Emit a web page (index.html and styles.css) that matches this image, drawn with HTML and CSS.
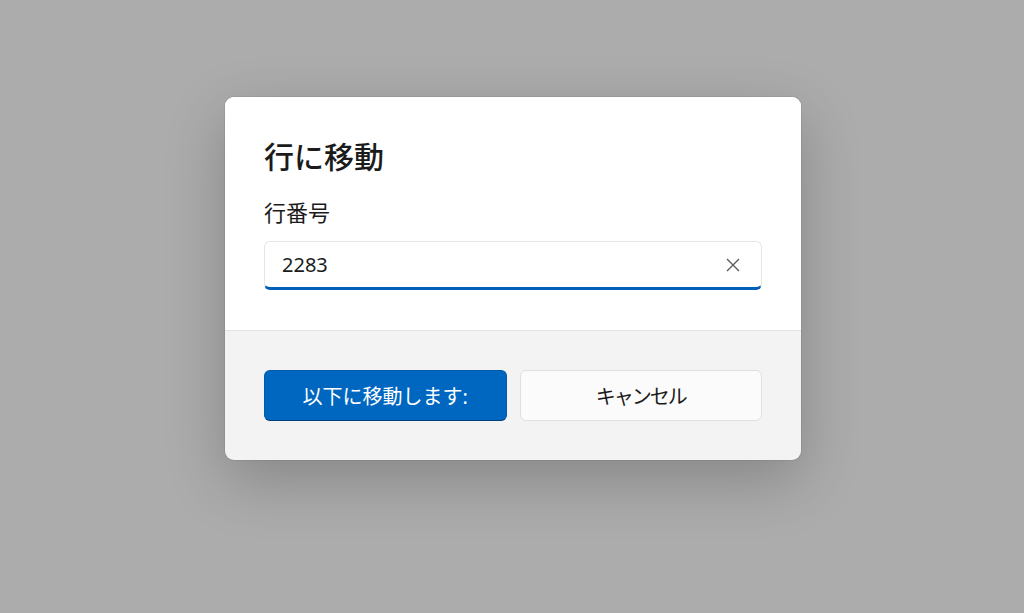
FILE: index.html
```html
<!DOCTYPE html>
<html lang="ja">

<head>
    <meta charset="utf-8">
    <meta name="viewport" content="width=device-width, initial-scale=1.0">
    <title>行に移動</title>
    <link rel="stylesheet" href="styles.css">
</head>

<body>
    <div class="dialog">
        <div class="dialog-body">
            <h1 class="dialog-title">行に移動</h1>
            <label class="field-label" for="line">行番号</label>
            <div class="text-box">
                <input id="line" type="text" value="2283">
                <span class="clear-btn">
                    <svg width="14" height="14" viewBox="0 0 14 14">
                        <path d="M1 1 L13 13 M13 1 L1 13" stroke="#5c5c5c" stroke-width="1.4" fill="none"/>
                    </svg>
                </span>
            </div>
        </div>
        <div class="dialog-footer">
            <button class="btn btn-primary">以下に移動します:</button>
            <button class="btn btn-cancel">キャンセル</button>
        </div>
    </div>
</body>

</html>
```

FILE: styles.css
```css
html, body {
    margin: 0;
    padding: 0;
}

body {
    background: #acacac;
    height: 613px;
    overflow: hidden;
    font-family: "Noto Sans", "Noto Sans CJK JP", sans-serif;
    color: #1b1b1b;
}

.dialog {
    width: 576px;
    margin: 97px 0 0 225px;
    background: #f3f3f3;
    border-radius: 9px;
    overflow: hidden;
    box-shadow: 0 20px 60px rgba(0, 0, 0, 0.22), 0 0 0 1px rgba(0, 0, 0, 0.06);
}

.dialog-body {
    background: #fff;
    padding: 42px 39px 40px;
    border-bottom: 1px solid #e3e3e3;
}

.dialog-title {
    margin: 0;
    font-size: 30px;
    line-height: 36px;
    font-weight: 500;
}

.field-label {
    display: block;
    margin-top: 23px;
    font-size: 22px;
    line-height: 28px;
}

.text-box {
    margin-top: 15px;
    height: 45px;
    display: flex;
    align-items: center;
    border: 1px solid #e5e5e5;
    border-bottom: 3px solid #005fb8;
    border-radius: 6px;
    background: #fff;
}

.text-box input {
    flex: 1;
    border: 0;
    outline: none;
    background: transparent;
    font-family: inherit;
    font-size: 20px;
    color: #1b1b1b;
    padding: 0 0 0 17px;
}

.clear-btn {
    display: flex;
    width: 48px;
    justify-content: center;
    align-items: center;
    padding-right: 4px;
}

.dialog-footer {
    display: grid;
    grid-template-columns: 1fr 1fr;
    gap: 13px;
    padding: 39px;
}

.btn {
    height: 51px;
    border: 1px solid #e0e0e0;
    border-radius: 6px;
    background: #fbfbfb;
    font-family: inherit;
    font-size: 20px;
    color: #1b1b1b;
}

.btn-cancel {
    letter-spacing: -2px;
}

.btn-primary {
    background: #0067c0;
    border-color: #005ba9;
    border-bottom-color: #003e7a;
    color: #fff;
}
```
